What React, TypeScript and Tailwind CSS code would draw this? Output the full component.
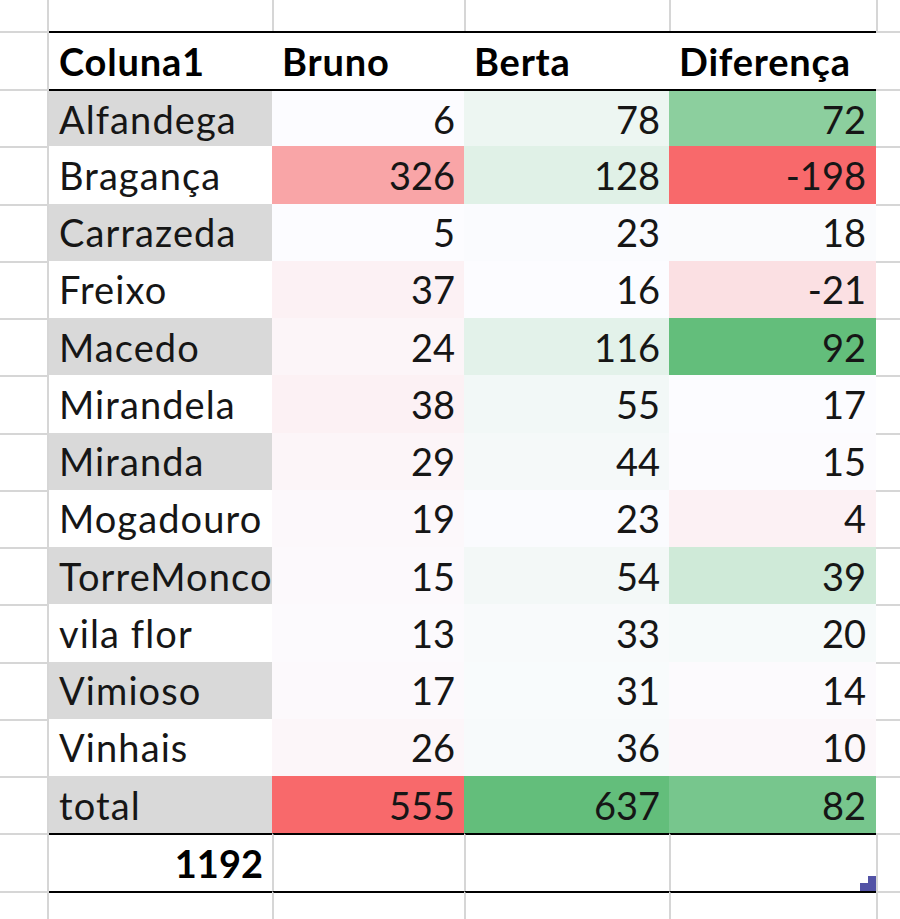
import React from "react";

type Row = {
  name: string;
  gray: boolean;
  b: number;
  bc: string;
  c: number;
  cc: string;
  d: number;
  dc: string;
};

const rows: Row[] = [
  { name: "Alfandega", gray: true, b: 6, bc: "bg-[#fcfcff]", c: 78, cc: "bg-[#edf6f2]", d: 72, dc: "bg-[#8ccf9e]" },
  { name: "Bragança", gray: false, b: 326, bc: "bg-[#f9a5a7]", c: 128, cc: "bg-[#e0f1e7]", d: -198, dc: "bg-[#f8696b]" },
  { name: "Carrazeda", gray: true, b: 5, bc: "bg-[#fcfcff]", c: 23, cc: "bg-[#fafbfe]", d: 18, dc: "bg-[#fafbfd]" },
  { name: "Freixo", gray: false, b: 37, bc: "bg-[#fcf1f4]", c: 16, cc: "bg-[#fcfcff]", d: -21, dc: "bg-[#fbe0e3]" },
  { name: "Macedo", gray: true, b: 24, bc: "bg-[#fcf5f8]", c: 116, cc: "bg-[#e3f2ea]", d: 92, dc: "bg-[#63be7b]" },
  { name: "Mirandela", gray: false, b: 38, bc: "bg-[#fcf1f4]", c: 55, cc: "bg-[#f2f8f7]", d: 17, dc: "bg-[#fcfcff]" },
  { name: "Miranda", gray: true, b: 29, bc: "bg-[#fcf5f8]", c: 44, cc: "bg-[#f5f9f9]", d: 15, dc: "bg-[#fcfbfe]" },
  { name: "Mogadouro", gray: false, b: 19, bc: "bg-[#fcf8fb]", c: 23, cc: "bg-[#fafbfe]", d: 4, dc: "bg-[#fcf1f4]" },
  { name: "TorreMoncorvo", gray: true, b: 15, bc: "bg-[#fcf9fc]", c: 54, cc: "bg-[#f3f8f7]", d: 39, dc: "bg-[#cfead8]" },
  { name: "vila flor", gray: false, b: 13, bc: "bg-[#fcfafd]", c: 33, cc: "bg-[#f8fafb]", d: 20, dc: "bg-[#f6fafa]" },
  { name: "Vimioso", gray: true, b: 17, bc: "bg-[#fcf9fc]", c: 31, cc: "bg-[#f8fbfc]", d: 14, dc: "bg-[#fcfafd]" },
  { name: "Vinhais", gray: false, b: 26, bc: "bg-[#fcf6f9]", c: 36, cc: "bg-[#f7fafb]", d: 10, dc: "bg-[#fcf7fa]" },
  { name: "total", gray: true, b: 555, bc: "bg-[#f8696b]", c: 637, cc: "bg-[#63be7b]", d: 82, dc: "bg-[#77c68d]" },
];

const grid = "grid grid-cols-[49px_223px_192px_205px_207px_24px]";
const gl = "border-[#d6d6d6]";

export default function App() {
  return (
    <div className="w-[900px] h-[919px] bg-white overflow-hidden font-['Lato','Open_Sans',sans-serif] text-[38px] text-[#161616]">
      {/* top empty row */}
      <div className={`${grid} h-[31px]`}>
        <div className={`border-r-2 ${gl}`} />
        <div />
        <div className={`border-l-2 ${gl}`} />
        <div className={`border-l-2 ${gl}`} />
        <div className={`border-l-2 ${gl}`} />
        <div className={`border-l-2 ${gl}`} />
      </div>

      {/* header row */}
      <div className={`${grid} h-[58px] font-bold text-black tracking-[0.8px]`}>
        <div className={`border-r-2 border-t-2 ${gl}`} />
        <div className="border-t-2 border-black bg-white flex items-center pl-[10px] leading-none">Coluna1</div>
        <div className="border-t-2 border-black bg-white flex items-center pl-[10px] leading-none">Bruno</div>
        <div className="border-t-2 border-black bg-white flex items-center pl-[10px] leading-none">Berta</div>
        <div className="border-t-2 border-black bg-white flex items-center pl-[10px] leading-none">Diferença</div>
        <div className={`border-t-2 ${gl}`} />
      </div>

      {/* data rows */}
      {rows.map((r, i) => {
        const top = i === 0 ? "border-t-2 border-black" : "";
        return (
          <div key={r.name} className={`${grid} h-[57.25px]`}>
            <div className={`border-r-2 border-t-2 ${gl}`} />
            <div
              className={`${top} ${r.gray ? "bg-[#d9d9d9]" : "bg-white"} flex items-center pl-[10px] overflow-hidden whitespace-nowrap leading-none tracking-[1.1px]`}
            >
              {r.name}
            </div>
            <div className={`${top} ${r.bc} flex items-center justify-end pr-[9px] leading-none`}>{r.b}</div>
            <div className={`${top} ${r.cc} flex items-center justify-end pr-[9px] leading-none`}>{r.c}</div>
            <div className={`${top} ${r.dc} flex items-center justify-end pr-[10px] leading-none`}>{r.d}</div>
            <div className={`border-t-2 ${gl}`} />
          </div>
        );
      })}

      {/* 1192 row */}
      <div className={`${grid} h-[58px]`}>
        <div className={`border-r-2 border-t-2 ${gl}`} />
        <div className="border-t-2 border-black flex items-center justify-end pr-[9px] font-bold text-black leading-none">1192</div>
        <div className="border-t-2 border-t-black border-l-2 border-l-[#d6d6d6]" />
        <div className="border-t-2 border-t-black border-l-2 border-l-[#d6d6d6]" />
        <div className="relative border-t-2 border-t-black border-l-2 border-l-[#d6d6d6]">
          <div className="absolute right-0 bottom-0 w-[16px] h-[8px] bg-[#5353a6]" />
          <div className="absolute right-0 bottom-[8px] w-[8px] h-[7px] bg-[#5353a6]" />
        </div>
        <div className={`border-t-2 border-l-2 ${gl}`} />
      </div>

      {/* bottom row */}
      <div className={`${grid} h-[40px]`}>
        <div className={`border-r-2 border-t-2 ${gl}`} />
        <div className="border-t-2 border-black" />
        <div className="border-t-2 border-t-black border-l-2 border-l-[#d6d6d6]" />
        <div className="border-t-2 border-t-black border-l-2 border-l-[#d6d6d6]" />
        <div className="border-t-2 border-t-black border-l-2 border-l-[#d6d6d6]" />
        <div className={`border-t-2 border-l-2 ${gl}`} />
      </div>
    </div>
  );
}
